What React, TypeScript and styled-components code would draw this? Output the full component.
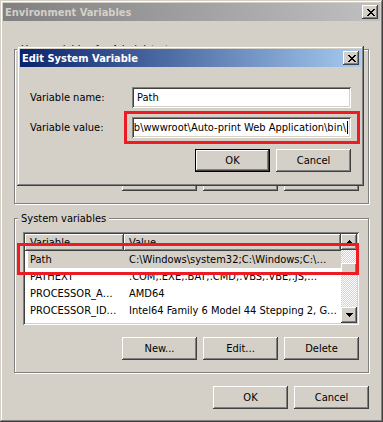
import React from 'react';
import styled, { createGlobalStyle, css } from 'styled-components';

const userVars = [
  { name: 'TEMP', value: '%USERPROFILE%\\AppData\\Local\\Temp' },
  { name: 'TMP', value: '%USERPROFILE%\\AppData\\Local\\Temp' },
];

const systemVars = [
  { name: 'Path', value: 'C:\\Windows\\system32;C:\\Windows;C:\\…', selected: true },
  { name: 'PATHEXT', value: '.COM;.EXE;.BAT;.CMD;.VBS;.VBE;.JS;…' },
  { name: 'PROCESSOR_A…', value: 'AMD64' },
  { name: 'PROCESSOR_ID…', value: 'Intel64 Family 6 Model 44 Stepping 2, G…' },
];

const CloseGlyph = () => (
  <svg width="8" height="7" viewBox="0 0 8 7" shapeRendering="crispEdges">
    <path
      d="M0 0h2v1H0zM6 0h2v1H6zM1 1h2v1H1zM5 1h2v1H5zM2 2h4v1H2zM3 3h2v1H3zM2 4h4v1H2zM1 5h2v1H1zM5 5h2v1H5zM0 6h2v1H0zM6 6h2v1H6z"
      fill="#000"
    />
  </svg>
);

const Arrow = ({ down }: { down?: boolean }) => (
  <svg width="7" height="4" viewBox="0 0 7 4" shapeRendering="crispEdges" style={{ transform: down ? 'scaleY(-1)' : undefined }}>
    <path d="M3 0h1v1H3zM2 1h3v1H2zM1 2h5v1H1zM0 3h7v1H0z" fill="#000" />
  </svg>
);

const VarList = ({ rows }: { rows: { name: string; value: string; selected?: boolean }[] }) => (
  <ListView>
    <ListContent>
      <HeaderRow>
        <HeaderCell $w={99}>Variable</HeaderCell>
        <HeaderCell>Value</HeaderCell>
      </HeaderRow>
      {rows.map((r) => (
        <Row key={r.name} $selected={r.selected}>
          <NameCell>{r.name}</NameCell>
          <ValueCell>{r.value}</ValueCell>
        </Row>
      ))}
    </ListContent>
    <ScrollBar>
      <ScrollButton>
        <Arrow />
      </ScrollButton>
      <Track>
        <Thumb />
      </Track>
      <ScrollButton>
        <Arrow down />
      </ScrollButton>
    </ScrollBar>
  </ListView>
);

const App = () => {
  return (
    <>
      <GlobalStyle />
      <Window>
        <TitleBar>
          <span>Environment Variables</span>
          <CloseButton>
            <CloseGlyph />
          </CloseButton>
        </TitleBar>
        <Body>
          <GroupBox>
            <GroupLabel>User variables for Administrator</GroupLabel>
            <VarList rows={userVars} />
            <ButtonRow>
              <Button>New...</Button>
              <Button>Edit...</Button>
              <Button>Delete</Button>
            </ButtonRow>
          </GroupBox>
          <GroupBox>
            <GroupLabel>System variables</GroupLabel>
            <VarList rows={systemVars} />
            <ButtonRow>
              <Button>New...</Button>
              <Button>Edit...</Button>
              <Button>Delete</Button>
            </ButtonRow>
          </GroupBox>
          <FooterRow>
            <Button>OK</Button>
            <Button>Cancel</Button>
          </FooterRow>
        </Body>

        <Dialog>
          <TitleBar $active>
            <span>Edit System Variable</span>
            <CloseButton>
              <CloseGlyph />
            </CloseButton>
          </TitleBar>
          <DialogBody>
            <FieldRow>
              <FieldLabel>Variable name:</FieldLabel>
              <TextBox>
                <TextClip>
                  <span>Path</span>
                </TextClip>
              </TextBox>
            </FieldRow>
            <FieldRow>
              <FieldLabel>Variable value:</FieldLabel>
              <TextBox $marked>
                <TextClip $end>
                  <span>C:\inetpub\wwwroot\Auto-print Web Application\bin\</span>
                  <Caret />
                </TextClip>
              </TextBox>
            </FieldRow>
            <DialogButtons>
              <Button $default>OK</Button>
              <Button>Cancel</Button>
            </DialogButtons>
          </DialogBody>
        </Dialog>
      </Window>
    </>
  );
};

export default App;

// styles

const GlobalStyle = createGlobalStyle`
  html, body { margin: 0; padding: 0; background: #d4d0c8; }
  body {
    font-family: "DejaVu Sans Condensed", "Liberation Sans", Arial, sans-serif;
    font-stretch: condensed;
    font-size: 11px;
    color: #000;
  }
  * { box-sizing: border-box; }
`;

const windowFrame = css`
  box-shadow: inset -1px -1px #404040, inset 1px 1px #d4d0c8, inset -2px -2px #808080, inset 2px 2px #fff;
`;

const buttonFrame = css`
  box-shadow: inset -1px -1px #404040, inset 1px 1px #fff, inset -2px -2px #808080, inset 2px 2px #d4d0c8;
`;

const sunken = css`
  box-shadow: inset 1px 1px #808080, inset -1px -1px #fff, inset 2px 2px #404040, inset -2px -2px #d4d0c8;
`;

const redMark = css`
  content: '';
  position: absolute;
  border: 3px solid #ed1c24;
  z-index: 2;
  pointer-events: none;
`;

const Window = styled.div`
  position: relative;
  width: 383px;
  height: 422px;
  padding: 3px;
  background: #d4d0c8;
  display: flex;
  flex-direction: column;
  overflow: hidden;
  ${windowFrame}
`;

const TitleBar = styled.div<{ $active?: boolean }>`
  height: 18px;
  flex-shrink: 0;
  display: flex;
  align-items: center;
  justify-content: space-between;
  padding: 0 2px 0 2px;
  font-weight: bold;
  font-size: 11px;
  white-space: nowrap;
  color: ${(p) => (p.$active ? '#fff' : '#d4d0c8')};
  background: ${(p) =>
    p.$active
      ? 'linear-gradient(to right, #0a246a, #a6caf0)'
      : 'linear-gradient(to right, #808080, #c0c0c0)'};
`;

const CloseButton = styled.div`
  width: 16px;
  height: 14px;
  display: flex;
  align-items: center;
  justify-content: center;
  padding-left: 1px;
  background: #d4d0c8;
  ${buttonFrame}
`;

const Body = styled.div`
  flex: 1;
  display: flex;
  flex-direction: column;
  padding: 28px 11px 0;
`;

const GroupBox = styled.div`
  display: flex;
  flex-direction: column;
  padding: 0 9px 12px 8px;
  border: 1px solid #808080;
  box-shadow: inset 1px 1px #fff, 1px 1px #fff;

  & + & {
    margin-top: 14px;
  }
`;

const GroupLabel = styled.div`
  align-self: flex-start;
  height: 13px;
  line-height: 13px;
  margin: -7px 0 0 -5px;
  padding: 0 3px;
  background: #d4d0c8;
  white-space: nowrap;
`;

const ListView = styled.div`
  height: 93px;
  margin-top: 7px;
  padding: 2px;
  display: flex;
  background: #fff;
  ${sunken}
`;

const ListContent = styled.div`
  flex: 1;
  display: flex;
  flex-direction: column;
  min-width: 0;
`;

const HeaderRow = styled.div`
  display: flex;
  height: 17px;
  flex-shrink: 0;
`;

const HeaderCell = styled.div<{ $w?: number }>`
  ${(p) => (p.$w ? `width: ${p.$w}px;` : 'flex: 1;')}
  height: 17px;
  line-height: 17px;
  padding-left: 5px;
  background: #d4d0c8;
  ${buttonFrame}
`;

const Row = styled.div<{ $selected?: boolean }>`
  position: relative;
  display: flex;
  height: 17px;
  line-height: 17px;
  margin-left: 3px;
  flex-shrink: 0;
  white-space: nowrap;
  background: ${(p) => (p.$selected ? '#d4d0c8' : 'transparent')};

  ${(p) =>
    p.$selected &&
    css`
      &::after {
        ${redMark}
        top: -8px;
        bottom: -7px;
        left: -11px;
        right: -18px;
      }
    `}
`;

const NameCell = styled.div`
  width: 96px;
  padding-left: 2px;
  overflow: hidden;
`;

const ValueCell = styled.div`
  flex: 1;
  padding-left: 5px;
  overflow: hidden;
`;

const ScrollBar = styled.div`
  width: 16px;
  display: flex;
  flex-direction: column;
`;

const ScrollButton = styled.div`
  height: 16px;
  display: flex;
  align-items: center;
  justify-content: center;
  background: #d4d0c8;
  ${buttonFrame}
`;

const Track = styled.div`
  flex: 1;
  padding-top: 13px;
  background: conic-gradient(#fff 25%, #d4d0c8 0 50%, #fff 0 75%, #d4d0c8 0) 0 0 / 2px 2px;
`;

const Thumb = styled.div`
  height: 11px;
  background: #d4d0c8;
  ${buttonFrame}
`;

const ButtonRow = styled.div`
  display: flex;
  justify-content: flex-end;
  gap: 6px;
  margin-top: 12px;
`;

const FooterRow = styled(ButtonRow)`
  margin-top: 13px;
`;

const Button = styled.div<{ $default?: boolean }>`
  width: 75px;
  height: 23px;
  display: flex;
  align-items: center;
  justify-content: center;
  background: #d4d0c8;
  ${(p) =>
    p.$default
      ? css`
          border: 1px solid #000;
          ${buttonFrame}
        `
      : buttonFrame}
`;

const Dialog = styled.div`
  position: absolute;
  top: 46px;
  left: 17px;
  width: 347px;
  height: 140px;
  padding: 3px;
  display: flex;
  flex-direction: column;
  background: #d4d0c8;
  ${windowFrame}
`;

const DialogBody = styled.div`
  display: flex;
  flex-direction: column;
  gap: 9px;
  padding: 20px 10px 0 10px;
`;

const FieldRow = styled.div`
  display: flex;
  align-items: center;
  height: 21px;
`;

const FieldLabel = styled.div`
  width: 102px;
  white-space: nowrap;
`;

const TextBox = styled.div<{ $marked?: boolean }>`
  position: relative;
  width: 219px;
  height: 21px;
  padding: 2px 3px 2px 2px;
  display: flex;
  background: #fff;
  ${sunken}

  ${(p) =>
    p.$marked &&
    css`
      &::after {
        ${redMark}
        top: -6px;
        bottom: -6px;
        left: -8px;
        right: -9px;
      }
    `}
`;

const TextClip = styled.div<{ $end?: boolean }>`
  flex: 1;
  min-width: 0;
  display: flex;
  align-items: center;
  justify-content: ${(p) => (p.$end ? 'flex-end' : 'flex-start')};
  padding-left: ${(p) => (p.$end ? '0' : '3px')};
  overflow: hidden;
  white-space: nowrap;

  & > span {
    flex-shrink: 0;
  }
`;

const Caret = styled.i`
  display: block;
  flex-shrink: 0;
  width: 1px;
  height: 13px;
  margin-left: 1px;
  background: #000;
`;

const DialogButtons = styled.div`
  display: flex;
  justify-content: flex-end;
  gap: 6px;
  margin-top: 2px;
`;
